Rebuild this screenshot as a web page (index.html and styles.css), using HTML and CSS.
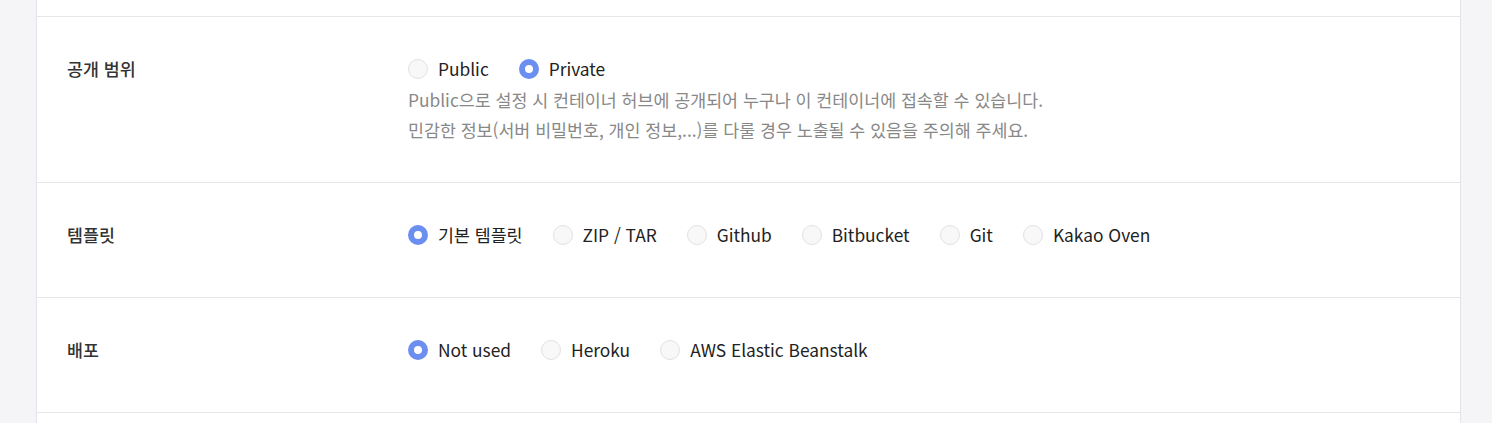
FILE: index.html
```html
<!DOCTYPE html>
<html lang="ko">
<head>
<meta charset="utf-8">
<link rel="stylesheet" href="styles.css">
</head>
<body>
<div class="page">
  <div class="panel">
    <div class="row row-top"></div>
    <div class="row row-visibility">
      <div class="label">공개 범위</div>
      <div class="field">
        <div class="radios">
          <label class="radio"><span class="dot"></span><span class="text">Public</span></label>
          <label class="radio"><span class="dot on"></span><span class="text">Private</span></label>
        </div>
        <p class="help">Public으로 설정 시 컨테이너 허브에 공개되어 누구나 이 컨테이너에 접속할 수 있습니다.<br>민감한 정보(서버 비밀번호, 개인 정보,...)를 다룰 경우 노출될 수 있음을 주의해 주세요.</p>
      </div>
    </div>
    <div class="row">
      <div class="label">템플릿</div>
      <div class="field">
        <div class="radios">
          <label class="radio"><span class="dot on"></span><span class="text">기본 템플릿</span></label>
          <label class="radio"><span class="dot"></span><span class="text">ZIP / TAR</span></label>
          <label class="radio"><span class="dot"></span><span class="text">Github</span></label>
          <label class="radio"><span class="dot"></span><span class="text">Bitbucket</span></label>
          <label class="radio"><span class="dot"></span><span class="text">Git</span></label>
          <label class="radio"><span class="dot"></span><span class="text">Kakao Oven</span></label>
        </div>
      </div>
    </div>
    <div class="row">
      <div class="label">배포</div>
      <div class="field">
        <div class="radios">
          <label class="radio"><span class="dot on"></span><span class="text">Not used</span></label>
          <label class="radio"><span class="dot"></span><span class="text">Heroku</span></label>
          <label class="radio"><span class="dot"></span><span class="text">AWS Elastic Beanstalk</span></label>
        </div>
      </div>
    </div>
    <div class="row row-bottom"></div>
  </div>
</div>
</body>
</html>
```

FILE: styles.css
```css
html, body {
  margin: 0;
  padding: 0;
  background: #f5f5f8;
  font-family: "Noto Sans CJK KR", "Noto Sans", sans-serif;
  color: #222;
}
.page {
  padding: 0 31px 0 36px;
  height: 423px;
  overflow: hidden;
}
.panel {
  background: #fff;
  border-left: 1px solid #e3e3ea;
  border-right: 1px solid #e3e3ea;
  height: 100%;
}
.row {
  display: flex;
  border-bottom: 1px solid #e5e5ea;
  padding: 37px 0 47px;
}
.row-top {
  height: 17px;
  padding: 0;
  box-sizing: border-box;
}
.row-visibility {
  padding-bottom: 37px;
}
.row-bottom {
  border-bottom: 0;
  padding: 0;
}
.label {
  width: 371px;
  padding-left: 30px;
  box-sizing: border-box;
  font-size: 17.33px;
  font-weight: 500;
  line-height: 30px;
  color: #333;
}
.field {
  flex: 1;
}
.radios {
  display: flex;
  gap: 30px;
  height: 30px;
  align-items: center;
}
.radio {
  display: flex;
  align-items: center;
  gap: 10px;
  font-size: 17.33px;
  line-height: 30px;
  color: #222;
}
.dot {
  width: 20px;
  height: 20px;
  border-radius: 50%;
  border: 1px solid #e2e2e6;
  background: #f8f8f9;
  box-sizing: border-box;
}
.dot.on {
  border: 6.5px solid #6b8ff0;
  background: #fff;
}
.help {
  margin: 1px 0 0;
  font-size: 17.33px;
  line-height: 30px;
  color: #888;
}
```
